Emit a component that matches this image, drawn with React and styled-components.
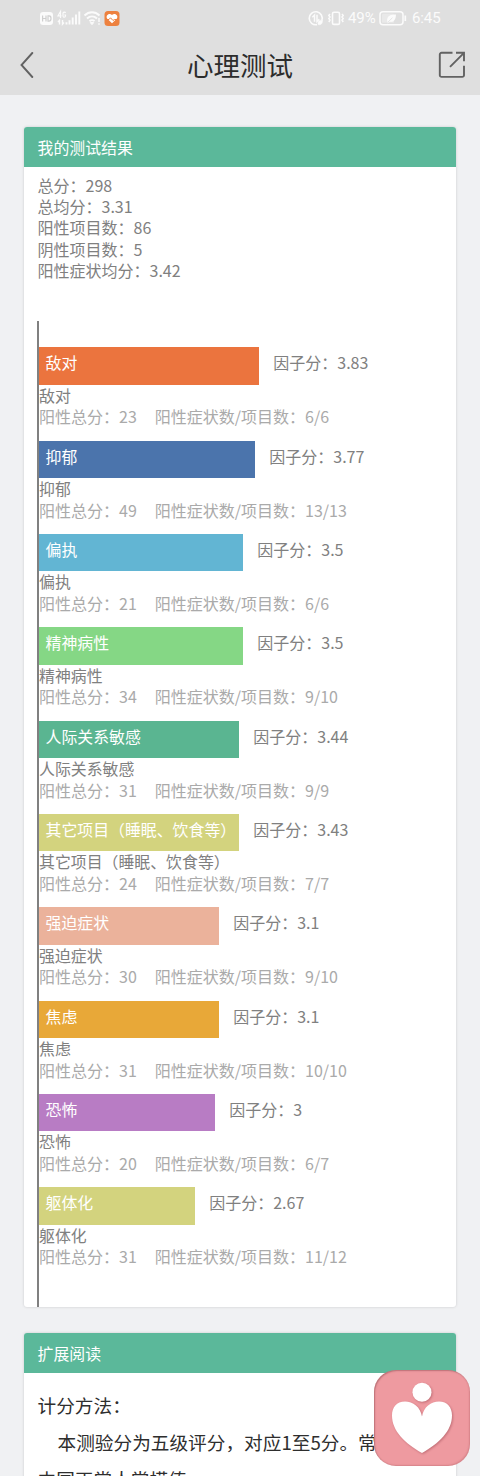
import styled, { createGlobalStyle } from 'styled-components';

const GlobalStyle = createGlobalStyle`
  * {
    box-sizing: border-box;
  }
  html {
    overflow: hidden;
  }
  body {
    margin: 0;
    height: 1476px;
    overflow: hidden;
    background-color: #f0f1f3;
    font-family: 'Noto Sans CJK SC', sans-serif;
    font-size: 16px;
    line-height: 21.33px;
    color: #808080;
  }
`;

const Top = styled.header`
  height: 94.5px;
  background-color: #dfdfdf;
`;

const StatusBar = styled.div`
  display: flex;
  align-items: center;
  justify-content: space-between;
  height: 35px;
  padding: 0 40px 0 38.5px;
`;

const StatusGroup = styled.div`
  display: flex;
  align-items: center;
  height: 16px;
  color: #fbfbfb;
  svg {
    display: block;
  }
`;

const StatusText = styled.span`
  font-family: Roboto, sans-serif;
  font-size: 15px;
  line-height: 16px;
  width: 28px;
  white-space: nowrap;
  letter-spacing: -0.1px;
  margin-left: ${(props) => props.$gap}px;
`;

const NavBar = styled.div`
  display: flex;
  align-items: center;
  justify-content: space-between;
  height: 59px;
  padding: 0 14px 0 20px;
  svg {
    display: block;
  }
`;

const NavSide = styled.div`
  display: flex;
  width: ${(props) => (props.$end ? '34px' : '28px')};
  justify-content: ${(props) => (props.$end ? 'flex-end' : 'flex-start')};
`;

const Title = styled.h1`
  margin: 0;
  font-size: 26.5px;
  font-weight: 400;
  line-height: 36px;
  color: #2c2c2c;
`;

const Main = styled.main`
  display: flex;
  flex-direction: column;
  gap: 26.67px;
  padding: 32.8px 24px 0;
`;

const Card = styled.section`
  background-color: #fff;
  border-radius: 3px;
  overflow: hidden;
  box-shadow: 0 0 3px rgba(0, 0, 0, 0.16);
`;

const CardHead = styled.h2`
  display: flex;
  align-items: center;
  height: 40px;
  margin: 0;
  padding: 0 13.5px;
  font-size: 15.9px;
  font-weight: 400;
  color: #fff;
  background-color: #5bb89a;
`;

const Summary = styled.div`
  padding: 7.5px 13.5px 0;
`;

const Chart = styled.div`
  margin: 39.17px 13.33px 0 13px;
  padding: 26.67px 0 26px;
  border-left: 2px solid #808080;
`;

const Factor = styled.div`
  height: 93.33px;
`;

const BarLine = styled.div`
  display: flex;
  height: 37.33px;
  line-height: 31px;
  white-space: nowrap;
`;

const Bar = styled.div`
  padding-left: 6.5px;
  font-size: 15.9px;
  color: #fff;
  background-color: ${(props) => props.$color};
`;

const Score = styled.span`
  margin-left: 14px;
`;

const Name = styled.div`
  font-size: 15.9px;
`;

const Detail = styled.div`
  display: flex;
  gap: 18px;
  padding-top: 0.5px;
  color: #aaa;
  white-space: nowrap;
`;

const Article = styled.article`
  height: 160px;
  padding: 13px 13.5px 0;
  font-size: 18.67px;
  line-height: 37px;
  color: #2e2e2e;
  white-space: nowrap;
  p {
    margin: 0;
  }
`;

const Indented = styled.p`
  text-indent: 20px;
`;

const FloatButton = styled.button`
  position: fixed;
  left: 374px;
  top: 1370px;
  width: 96px;
  height: 96px;
  padding: 0;
  border: 0;
  border-radius: 22px;
  background-color: #ee9aa0;
  box-shadow: inset 1px 1px 1.5px rgba(110, 50, 55, 0.4),
    inset -1px -1px 1.5px rgba(150, 70, 75, 0.25);
  svg {
    display: block;
    filter: drop-shadow(1px 1px 1px rgba(130, 50, 60, 0.4));
  }
`;

const summary = [
  ['总分', '298'],
  ['总均分', '3.31'],
  ['阳性项目数', '86'],
  ['阴性项目数', '5'],
  ['阳性症状均分', '3.42'],
];

const factors = [
  { name: '敌对', score: '3.83', total: 23, count: '6/6', percent: 55, color: '#eb743e' },
  { name: '抑郁', score: '3.77', total: 49, count: '13/13', percent: 54, color: '#4b74ac' },
  { name: '偏执', score: '3.5', total: 21, count: '6/6', percent: 51, color: '#62b5d3' },
  { name: '精神病性', score: '3.5', total: 34, count: '9/10', percent: 51, color: '#85d785' },
  { name: '人际关系敏感', score: '3.44', total: 31, count: '9/9', percent: 50, color: '#5ab591' },
  { name: '其它项目（睡眠、饮食等）', score: '3.43', total: 24, count: '7/7', percent: 50, color: '#d3d37e' },
  { name: '强迫症状', score: '3.1', total: 30, count: '9/10', percent: 45, color: '#ebb29b' },
  { name: '焦虑', score: '3.1', total: 31, count: '10/10', percent: 45, color: '#e8a838' },
  { name: '恐怖', score: '3', total: 20, count: '6/7', percent: 44, color: '#b87cc4' },
  { name: '躯体化', score: '2.67', total: 31, count: '11/12', percent: 39, color: '#d3d37e' },
];

// full length of a 100% bar
const TRACK = 400.5;

const SignalIcons = () => (
  <svg width="82" height="18" viewBox="0 0 82 18" fill="none">
    <rect x="1" y="3" width="13" height="13" rx="3" fill="#fbfbfb" />
    <path d="M3.600 6.500v6M7 6.500v6M3.600 9.500H7M9 6.800v5.400h1c1.500 0 2-.8 2-2.700s-.5-2.700-2-2.700z" stroke="#cfcfcf" strokeWidth="1.200" />
    <path d="M21.500 9V2.500L19 6.800h3.500M26.500 4c-.3-1.300-2.500-1.300-2.500.5v2.300c0 2 2.500 1.800 2.500 0V6h-1.200" stroke="#fbfbfb" strokeWidth="1.200" />
    <path d="M20.500 15.500v-4.200L19 13M23.500 11v4.200l1.500-1.700" stroke="#fbfbfb" strokeWidth="1.400" />
    <path d="M27.500 13.200v2.300M30.500 11.200v4.300M33.700 8.500v7M37 5.500v10M40.300 2.500v13" stroke="#fbfbfb" strokeWidth="1.900" />
    <path d="M45.500 6.500c4.500-4.300 10.500-4.300 15 0M48 9.500c3-2.800 7-2.800 10 0M50.500 12.200c1.600-1.500 3.600-1.500 5 0" stroke="#fbfbfb" strokeWidth="1.900" />
    <path d="M51.300 13.600L53 15.700l1.700-2.100z" fill="#fbfbfb" stroke="#fbfbfb" />
    <path d="M60 9v4M60 14.300v1.500" stroke="#fbfbfb" strokeWidth="1.500" />
    <rect x="65.500" y="2" width="15" height="15" rx="3.500" fill="#ed813f" />
    <path d="M73 14.300l-4.700-4.600C66 7 70 3.200 73 6c3-2.800 7 1 4.700 3.700z" fill="#fff" />
    <path d="M66 10.500h4l1.500-1.700 2.500 2.700 1.500-1H80" stroke="#ed813f" strokeWidth="1" />
  </svg>
);

const ModeIcons = () => (
  <svg width="38" height="18" viewBox="0 0 38 18" fill="none" stroke="#fbfbfb">
    <path d="M13.800 11.500A6.500 6.500 0 1 0 9 15.600" strokeWidth="1.600" />
    <path d="M6.500 12.800V6L4.300 8.300M9 5.800v6.700l2.300-2.300" strokeWidth="1.500" />
    <path d="M10 15.500c-.5-3.300 1.300-4.500 4.500-4.300 0 3.300-1.300 5-4.500 4.300z" fill="#fbfbfb" strokeWidth="0.500" />
    <rect x="24.500" y="3.200" width="7" height="12.200" rx="1.500" strokeWidth="1.600" />
    <path d="M22 5l-1.200 1.500 1.200 1.500-1.200 1.500 1.200 1.500-1.200 2M34 5l1.200 1.500L34 8l1.200 1.500L34 11l1.200 2" strokeWidth="1.500" />
  </svg>
);

const BatteryIcon = () => (
  <svg width="28" height="18" viewBox="0 0 28 18" fill="none">
    <rect x="1" y="2.700" width="23" height="13" rx="3" stroke="#fbfbfb" strokeWidth="1.500" />
    <rect x="3" y="4.700" width="12" height="9" rx="1" fill="#e9e9e9" />
    <path d="M8.500 13c-1.500-5 2-8 8.500-7.500-.2 5.500-2.500 8-6.500 7.200L8 14.500z" fill="#fbfbfb" />
    <path d="M8.500 13.500l5-4.800" stroke="#dfdfdf" strokeWidth="0.800" />
    <path d="M26.300 6.500v5.500" stroke="#fbfbfb" strokeWidth="1.700" />
  </svg>
);

const BackIcon = () => (
  <svg width="14" height="26" viewBox="0 0 14 26" fill="none">
    <path d="M12.300 1L1.500 13l10.800 12" stroke="#626262" strokeWidth="1.900" strokeLinecap="round" />
  </svg>
);

const ShareIcon = () => (
  <svg width="28" height="28" viewBox="0 0 28 28" fill="none" stroke="#626262" strokeWidth="1.900">
    <path d="M14.500 1.800H3.500A1.700 1.700 0 0 0 1.800 3.500v20.700a1.700 1.700 0 0 0 1.700 1.700h20.800a1.700 1.700 0 0 0 1.700-1.700V14.800" />
    <path d="M18 1.800h8v8.500M25.500 2.300L12 15.800" />
  </svg>
);

const HeartIcon = () => (
  <svg width="96" height="96" viewBox="0 0 96 96" fill="#fff">
    <circle cx="48" cy="22.300" r="9.500" />
    <path d="M48 46.500C46.500 37 39 31.500 31 31.500 22.500 31.500 18 37.500 18 45.500 18 61 31 73.500 48 83 65 73.500 78 61 78 45.500 78 37.500 73.500 31.500 65 31.500 57 31.500 49.500 37 48 46.500z" />
  </svg>
);

const FactorRow = ({ factor }) => (
  <Factor>
    <BarLine>
      <Bar $color={factor.color} style={{ width: (factor.percent * TRACK) / 100 }}>
        {factor.name}
      </Bar>
      <Score>因子分：{factor.score}</Score>
    </BarLine>
    <Name>{factor.name}</Name>
    <Detail>
      <span>阳性总分：{factor.total}</span>
      <span>阳性症状数/项目数：{factor.count}</span>
    </Detail>
  </Factor>
);

export default function App() {
  return (
    <>
      <GlobalStyle />
      <Top>
        <StatusBar>
          <StatusGroup>
            <SignalIcons />
          </StatusGroup>
          <StatusGroup>
            <ModeIcons />
            <StatusText $gap={2}>49%</StatusText>
            <StatusText $gap={3}>
              <BatteryIcon />
            </StatusText>
            <StatusText $gap={5}>6:45</StatusText>
          </StatusGroup>
        </StatusBar>
        <NavBar>
          <NavSide>
            <BackIcon />
          </NavSide>
          <Title>心理测试</Title>
          <NavSide $end>
            <ShareIcon />
          </NavSide>
        </NavBar>
      </Top>
      <Main>
        <Card>
          <CardHead>我的测试结果</CardHead>
          <Summary>
            {summary.map(([label, value]) => (
              <div key={label}>
                {label}：{value}
              </div>
            ))}
          </Summary>
          <Chart>
            {factors.map((factor) => (
              <FactorRow key={factor.name} factor={factor} />
            ))}
          </Chart>
        </Card>
        <Card>
          <CardHead>扩展阅读</CardHead>
          <Article>
            <p>计分方法：</p>
            <Indented>本测验分为五级评分，对应1至5分。常</Indented>
            <p>中国正常人常模值</p>
          </Article>
        </Card>
      </Main>
      <FloatButton aria-label="心理咨询">
        <HeartIcon />
      </FloatButton>
    </>
  );
}
